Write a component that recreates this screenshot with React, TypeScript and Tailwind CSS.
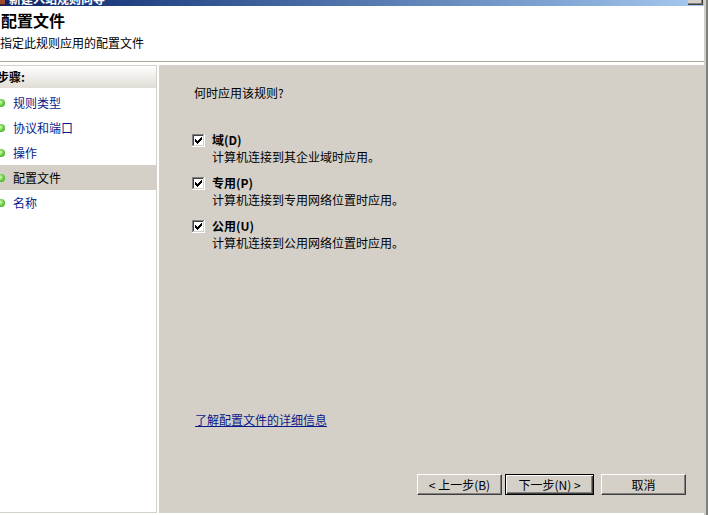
import React from "react";

const CHECK = [
  "......X",
  ".....XX",
  "X...XXX",
  "XX.XXX.",
  "XXXXX..",
  ".XXX...",
  "..X....",
];

function CheckBox() {
  const px: React.ReactElement[] = [];
  CHECK.forEach((row, y) =>
    row.split("").forEach((c, x) => {
      if (c === "X") px.push(<rect key={`${x}-${y}`} x={x + 3} y={y + 3} width="1" height="1" fill="#000" />);
    })
  );
  return (
    <svg width="13" height="13" viewBox="0 0 13 13" shapeRendering="crispEdges" className="shrink-0">
      <rect x="0" y="0" width="13" height="13" fill="#fff" />
      <rect x="0" y="0" width="12" height="1" fill="#808080" />
      <rect x="0" y="0" width="1" height="12" fill="#808080" />
      <rect x="1" y="1" width="10" height="1" fill="#404040" />
      <rect x="1" y="1" width="1" height="10" fill="#404040" />
      <rect x="1" y="11" width="11" height="1" fill="#d4d0c8" />
      <rect x="11" y="1" width="1" height="11" fill="#d4d0c8" />
      {px}
    </svg>
  );
}

function Option({ label, desc }: { label: string; desc: string }) {
  return (
    <div className="flex flex-col">
      <div className="flex items-center h-[16px]">
        <CheckBox />
        <span className="ml-[7px] font-bold">{label}</span>
      </div>
      <div className="pl-[20px] mt-[1px]">{desc}</div>
    </div>
  );
}

export default function App() {
  const steps = ["规则类型", "协议和端口", "操作", "配置文件", "名称"];
  return (
    <div className="w-[708px] h-[515px] flex bg-white overflow-hidden font-['Noto_Sans_CJK_SC','Noto_Sans',sans-serif] text-[12px] leading-[16px] text-black">
      <div className="w-[704px] flex flex-col">
        {/* title bar (mostly cut off) */}
        <div className="h-[6px] shrink-0 flex items-start overflow-hidden bg-linear-to-r from-[#0a246a] to-[#a6caf0]">
          <div className="w-[5px] h-[5px] bg-[#a04a2a] border-b border-[#5a2010]" />
          <span className="ml-[4px] -mt-[7px] leading-[12px] font-bold text-white whitespace-nowrap">新建入站规则向导</span>
          <div className="ml-auto mr-[1px] w-[15px] h-[5px] bg-[#d4d0c8] border-r border-b border-[#404040] shadow-[inset_-1px_-1px_0_#808080]" />
        </div>

        {/* header */}
        <div className="h-[55px] shrink-0 bg-white pl-[1px] flex flex-col">
          <div className="mt-[4px] text-[16px] leading-[20px] font-bold">配置文件</div>
          <div className="mt-[5px] -ml-[1px]">指定此规则应用的配置文件</div>
        </div>
        <div className="h-[1px] shrink-0 bg-[#aca899]" />
        <div className="h-[1px] shrink-0 bg-white" />

        {/* body */}
        <div className="flex-1 flex pt-[2px] pb-[2px] min-h-0">
          {/* steps panel */}
          <div className="w-[157px] shrink-0 bg-white border-t border-r border-b border-[#d4d0c8] flex flex-col overflow-hidden">
            <div className="h-[22px] shrink-0 flex items-center bg-linear-to-b from-white to-[#dfddd5]">
              <span className="-ml-[3px] font-bold">步骤:</span>
            </div>
            <div className="mt-[2px] flex flex-col">
              {steps.map((s, i) => (
                <div
                  key={s}
                  className={
                    i === 3
                      ? "h-[25px] flex items-center bg-[#d4d0c8] text-black"
                      : "h-[25px] flex items-center text-[#0a1a8a]"
                  }
                >
                  <div className="-ml-[3px] w-[8px] h-[8px] rounded-full shrink-0 bg-[radial-gradient(circle_at_40%_40%,#d8ffb0,#5cc83a_55%,#2a9018)]" />
                  <span className="ml-[8px]">{s}</span>
                </div>
              ))}
            </div>
          </div>

          {/* main panel */}
          <div className="ml-[2px] flex-1 bg-[#d4d0c8] flex flex-col pt-[20px] pl-[33px] pr-[18px] pb-[18px]">
            <div className="ml-[2px]">何时应用该规则?</div>
            <div className="mt-[31px] flex flex-col gap-[10px]">
              <Option label="域(D)" desc="计算机连接到其企业域时应用。" />
              <Option label="专用(P)" desc="计算机连接到专用网络位置时应用。" />
              <Option label="公用(U)" desc="计算机连接到公用网络位置时应用。" />
            </div>
            <a className="mt-auto ml-[3px] self-start underline text-[#0a1a8a] cursor-pointer">了解配置文件的详细信息</a>
            <div className="mt-[46px] flex justify-end">
              <button className="w-[85px] h-[21px] bg-[#d4d0c8] border border-t-white border-l-white border-b-[#404040] border-r-[#404040] shadow-[inset_-1px_-1px_0_#808080] flex items-center justify-center">
                &lt; 上一步(B)
              </button>
              <button className="ml-[3px] w-[89px] h-[21px] bg-[#d4d0c8] border border-black shadow-[inset_1px_1px_0_#fff,inset_-1px_-1px_0_#404040,inset_-2px_-2px_0_#808080] flex items-center justify-center">
                下一步(N) &gt;
              </button>
              <button className="ml-[7px] w-[85px] h-[21px] bg-[#d4d0c8] border border-t-white border-l-white border-b-[#404040] border-r-[#404040] shadow-[inset_-1px_-1px_0_#808080] flex items-center justify-center">
                取消
              </button>
            </div>
          </div>
        </div>
      </div>
      <div className="w-[4px] shrink-0 bg-[#808080] border-l-2 border-[#d4d0c8]" />
    </div>
  );
}
